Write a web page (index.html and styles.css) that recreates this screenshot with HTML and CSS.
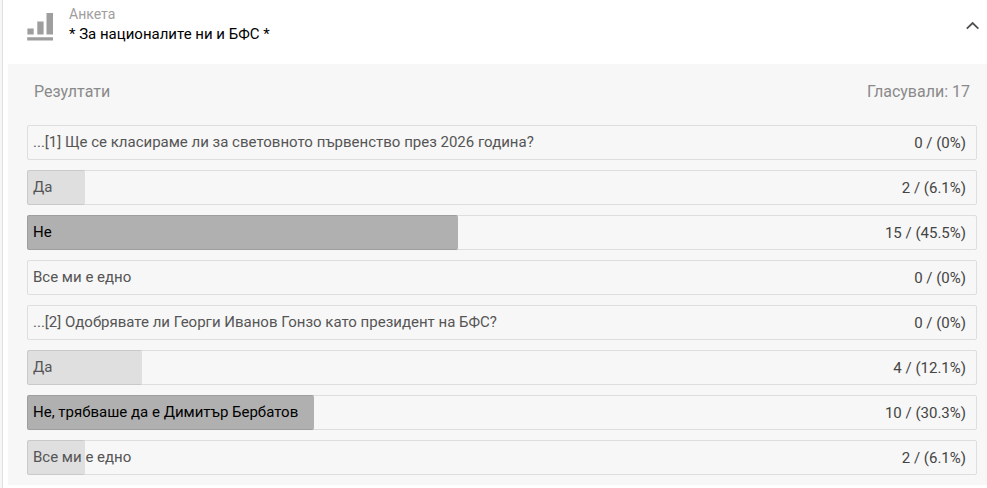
FILE: index.html
```html
<!DOCTYPE html>
<html lang="bg">

<head>
    <meta charset="utf-8">
    <title>Анкета</title>
    <link rel="stylesheet" href="styles.css">
</head>

<body>
    <div class="poll">
        <div class="poll-header">
            <svg class="poll-icon" width="26" height="28" viewBox="0 0 26 28">
                <path d="M.4 15.4h6.3v6.2H.4zM10.3 8.4h6.3v13.2h-6.3zM19.5 0H26v21.6h-6.5zM.2 24.3H26v3.2H.2z"/>
            </svg>
            <div class="poll-title">
                <span>Анкета</span>
                <h1>* За националите ни и БФС *</h1>
            </div>
            <svg class="arrow" width="14" height="9" viewBox="0 0 14 9">
                <path d="M1.8 7.7l5.8-5.7 5.8 5.7"/>
            </svg>
        </div>

        <div class="results">
            <div class="results-head">
                <span>Резултати</span>
                <span>Гласували: 17</span>
            </div>
            <div class="row">
                <span class="answer">...[1] Ще се класираме ли за световното първенство през 2026 година?</span>
                <span class="votes">0 / (0%)</span>
            </div>
            <div class="row">
                <div class="bar" style="width: 6.1%"></div>
                <span class="answer">Да</span>
                <span class="votes">2 / (6.1%)</span>
            </div>
            <div class="row top">
                <div class="bar" style="width: 45.5%"></div>
                <span class="answer">Не</span>
                <span class="votes">15 / (45.5%)</span>
            </div>
            <div class="row">
                <span class="answer">Все ми е едно</span>
                <span class="votes">0 / (0%)</span>
            </div>
            <div class="row">
                <span class="answer">...[2] Одобрявате ли Георги Иванов Гонзо като президент на БФС?</span>
                <span class="votes">0 / (0%)</span>
            </div>
            <div class="row">
                <div class="bar" style="width: 12.1%"></div>
                <span class="answer">Да</span>
                <span class="votes">4 / (12.1%)</span>
            </div>
            <div class="row top">
                <div class="bar" style="width: 30.3%"></div>
                <span class="answer">Не, трябваше да е Димитър Бербатов</span>
                <span class="votes">10 / (30.3%)</span>
            </div>
            <div class="row">
                <div class="bar" style="width: 6.1%"></div>
                <span class="answer">Все ми е едно</span>
                <span class="votes">2 / (6.1%)</span>
            </div>
        </div>
    </div>
</body>

</html>
```
FILE: styles.css
```css
* {
    margin: 0;
    box-sizing: border-box;
}

body {
    background-color: #f7f7f7;
    font-family: Roboto, "Noto Sans", sans-serif;
    padding-left: 2px;
    overflow: hidden;
}

.poll {
    height: 100vh;
    background-color: #fff;
    border-left: 1px solid #e0e0e0;
    padding-left: 5px;
}

.poll-header {
    height: 64px;
    display: flex;
    padding: 0 8px 0 19px;
}

.poll-icon {
    margin-top: 13px;
    fill: #9e9e9e;
}

.poll-title {
    flex: 1;
    margin-left: 16px;
    padding-top: 5px;
}

.poll-title span {
    display: block;
    font-size: 14px;
    line-height: 18px;
    color: #9e9e9e;
}

.poll-title h1 {
    font-size: 15px;
    font-weight: 400;
    line-height: 22px;
    color: #000;
}

.arrow {
    margin-top: 21px;
    fill: none;
    stroke: #505050;
    stroke-width: 1.8;
}

.results {
    height: 421px;
    background-color: #f7f7f7;
    padding: 0 10px 0 19px;
}

.results-head {
    height: 61px;
    display: flex;
    justify-content: space-between;
    padding: 18px 7px 0;
    font-size: 16px;
    line-height: 20px;
    color: #8a8a8a;
}

.row {
    position: relative;
    height: 35px;
    display: flex;
    justify-content: space-between;
    margin-bottom: 10px;
    padding: 0 10px 0 5px;
    border: 1px solid #dedede;
    border-radius: 2px;
    font-size: 15px;
    line-height: 32px;
}

/* the bar covers the row border too */
.bar {
    position: absolute;
    top: -1px;
    bottom: -1px;
    left: -1px;
    border-radius: 2px;
    background-color: rgba(0, 0, 0, .095);
}

.top .bar {
    background-color: rgba(0, 0, 0, .287);
}

.answer {
    position: relative;
    color: #555;
}

.top .answer {
    color: #000;
}

.votes {
    line-height: 34px;
    color: #444;
}
```
